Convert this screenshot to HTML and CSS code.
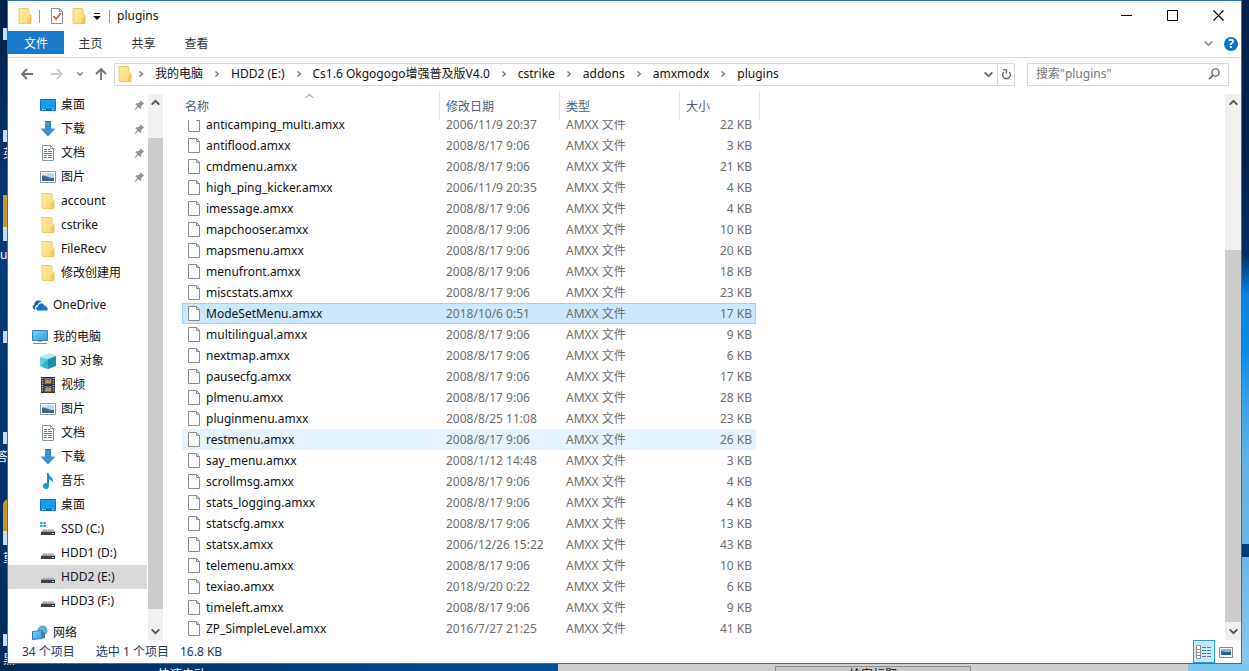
FILE: index.html
```html
<!DOCTYPE html>
<html lang="zh-CN">
<head>
<meta charset="utf-8">
<title>plugins</title>
<link rel="stylesheet" href="styles.css">
</head>
<body>
<svg class="defs" aria-hidden="true">
  <defs>
    <linearGradient id="gFolder" x1="0" x2="1" y1="0" y2="1"><stop offset="0" stop-color="#ffe9a2"/><stop offset="1" stop-color="#fbd975"/></linearGradient>
    <linearGradient id="gScreen" x1="0" x2="1" y1="0" y2="1"><stop offset="0" stop-color="#86d2f8"/><stop offset="1" stop-color="#2b9be6"/></linearGradient>
    <linearGradient id="gDrive" x1="0" x2="0" y1="0" y2="1"><stop offset="0" stop-color="#d8d8d8"/><stop offset="1" stop-color="#8d8d8d"/></linearGradient>
  </defs>
  <symbol id="folder" viewBox="0 0 16 16"><path d="M2 .5h9.500l.5 1v4l2 2v8H2z" fill="url(#gFolder)" stroke="#eccb6b"/><path d="M11.500 15.500v-4l2-3v7z" fill="#f5cf60" stroke="#e3b84b" stroke-width=".7"/></symbol>
  <symbol id="file" viewBox="0 0 16 16"><path d="M2.500 .5h8l3 3v11h-11z" fill="#fcfcfc" stroke="#8c8c8c"/><path d="M10.500 .5v3h3" fill="none" stroke="#8c8c8c"/></symbol>
  <symbol id="desktop" viewBox="0 0 16 16"><path d="M.5 2.500h15v11H.5z" fill="#149af2" stroke="#1175bd"/><path d="M1 12.500h14" stroke="#0868ac"/><path d="M2 12.500h2m1 0h1m6 0h2" stroke="#9bdcff"/></symbol>
  <symbol id="download" viewBox="0 0 16 16"><path d="M5 0h6v7.500h4.500L8 15.500.5 7.500H5z" fill="#3f8fd2"/><path d="M5.500.5h5V8" fill="none" stroke="#3079b8"/></symbol>
  <symbol id="doc" viewBox="0 0 16 16"><path d="M2.500.5h8l3 3v12h-11z" fill="#fff" stroke="#8195a5"/><path d="M10.500.5v3h3" fill="none" stroke="#8195a5"/><path d="M4 4.500h3m1 0h2M4 6.500h3m1 0h4M4 8.500h8M4 10.500h3m1 0h4M4 12.500h3m1 0h4" stroke="#3f86c6"/></symbol>
  <symbol id="picture" viewBox="0 0 16 16"><path d="M.5 2.500h15v11H.5z" fill="#fff" stroke="#8d9ba6"/><path d="M2 4h12v8H2z" fill="#b4d8f0"/><path d="M2 7c3-2 5 2 12 2v3H2z" fill="#3d6a91"/><path d="M3 5h4v1H3z" fill="#fff"/></symbol>
  <symbol id="cloud" viewBox="0 0 16 16"><path d="M3.500 12.500C.3 12.500-.3 8.800 2.200 8 2 4.500 6.300 1.700 9.700 5 7 5 5.600 6.500 5.500 8 3 8.500 2.600 11 3.500 12.500z" fill="#0f62b4"/><path d="M6 13.500c-2.500 0-2.600-4 .2-4C6 5.800 11.300 4.800 12 8.500c2-.3 2.300 1 2.200 1.800 2.200.2 2 3.200 0 3.200z" fill="#1173cc"/></symbol>
  <symbol id="computer" viewBox="0 0 16 16"><path d="M.5 1.500h15v10H.5z" fill="url(#gScreen)" stroke="#3487bd"/><path d="M6 12h4v1H6z" fill="#a7b7c3"/><path d="M1 14.500h14" stroke="#7c8e9c"/></symbol>
  <symbol id="cube" viewBox="0 0 16 16"><path d="M0 4 9 0l7 3-8 3z" fill="#b5eaf0"/><path d="M0 4l8 2v10l-8-3z" fill="#62cfdf"/><path d="M8 6l8-3v10l-8 3z" fill="#1593ad"/><path d="M2 12l6-6v10l-6-2z" fill="#35b5cb"/></symbol>
  <symbol id="video" viewBox="0 0 16 16"><path d="M1 0h14v16H1z" fill="#30343a"/><path d="M2.500 1v14M13.500 1v14" stroke="#d5d5d5" stroke-width="1.500" stroke-dasharray="1 1.300"/><path d="M4.500 1h7v6h-7z" fill="#5b71a0"/><path d="M4.500 9h7v6h-7z" fill="#596c9d"/><path d="m5 6 2-4 1 2 3-2v4M5 14l2-4 2 2 2-2v4" fill="#c49a40"/></symbol>
  <symbol id="music" viewBox="0 0 16 16"><path d="M7 0h1.700c.2 4 5.600 4.500 4.300 10-.6-3-2.300-3.500-4-3.500V13a3 3 0 1 1-2-2.800z" fill="#1d8fe0"/></symbol>
  <symbol id="drive" viewBox="0 0 16 16"><path d="M3 8h10l2 3H1z" fill="url(#gDrive)"/><path d="M1 11h14v3H1z" fill="#3e4145"/><path d="M12 12.500h2" stroke="#a6e0ad"/></symbol>
  <symbol id="ssd" viewBox="0 0 16 16"><use href="#drive"/><path d="M0 1h2.500v2H0zm3.500 0H6v2H3.500zM0 4h2.500v2H0zm3.500 0H6v2H3.500z" fill="#27a8dd"/></symbol>
  <symbol id="network" viewBox="0 0 16 16"><circle cx="10.500" cy="5.500" r="5" fill="#5fabd0"/><path d="M8 2c2 3 5 1 7 5l-3 3-4-3z" fill="#6fb4c0"/><path d="M.5 6.500 10 5.500v8l-9.500 1z" fill="url(#gScreen)" stroke="#247fb8"/><path d="M10 5.500 13 8v5l-3 .500z" fill="#3b83ac"/></symbol>
  <symbol id="pin" viewBox="0 0 12 12"><path d="m7 0 4 4-1.500.5-2 2.500.5 2-1 .8L4.700 7.500 1.200 11 .5 10.500l3-4L1.300 4.300l1-.8 2 .3L7 1.500z" fill="#8a9299"/></symbol>
  <symbol id="crumb" viewBox="0 0 8 8"><path d="m2.500 1.500 2.800 2.500-2.800 2.500" fill="none" stroke="#777" stroke-width="1.400"/></symbol>
  <symbol id="down" viewBox="0 0 10 10"><path d="m1.500 3 3.500 3.500L8.500 3" fill="none" stroke="currentColor" stroke-width="1.600"/></symbol>
  <symbol id="up" viewBox="0 0 10 10"><path d="m1.500 7 3.500-3.500L8.500 7" fill="none" stroke="currentColor" stroke-width="1.600"/></symbol>
  <symbol id="arrow" viewBox="0 0 14 14"><path d="M13 7H2m5-5L2 7l5 5" fill="none" stroke="currentColor" stroke-width="1.800"/></symbol>
</svg>

<div class="desktop" aria-hidden="true">
  <i class="shortcut s1"></i><i class="shortcut s2"></i><i class="shortcut gold s3"></i><i class="shortcut s4"></i><i class="shortcut s5"></i><i class="shortcut gold s6"></i><i class="shortcut s7"></i>
  <span class="caption c1">英</span><span class="caption c2">ui</span><span class="caption c3">答</span><span class="caption c4">重</span><span class="caption c5">黑</span>
  <span class="caption c6">快速启动</span>
  <div class="panel"><span class="panel-button">给安标题</span></div>
</div>

<main class="window">
  <header class="titlebar">
    <svg class="icon"><use href="#folder"/></svg>
    <i class="rule rule-a"></i>
    <button class="quick" aria-label="属性"><svg class="icon" viewBox="0 0 16 16"><path d="M2.500.5h8l3 3v12h-11z" fill="#fff" stroke="#8c8c8c"/><path d="M10.500.5v3h3" fill="none" stroke="#8c8c8c"/><path d="m4.500 8 2.500 3 5-6" fill="none" stroke="#d9633c" stroke-width="1.800"/></svg></button>
    <button class="quick quick-b" aria-label="新建文件夹"><svg class="icon"><use href="#folder"/></svg></button>
    <button class="quick" aria-label="自定义快速访问工具栏"><svg class="caret" viewBox="0 0 8 8"><path d="M1 1.500h6" stroke="#111"/><path d="M0 4h8l-4 4z" fill="#111"/></svg></button>
    <i class="rule rule-b"></i>
    <h1 class="title">plugins</h1>
    <div class="controls">
      <button class="control" aria-label="最小化"><svg viewBox="0 0 11 11"><path d="M0 5.500h11" stroke="#000"/></svg></button>
      <button class="control" aria-label="最大化"><svg viewBox="0 0 11 11"><path d="M.5.5h10v10H.5z" fill="none" stroke="#000"/></svg></button>
      <button class="control" aria-label="关闭"><svg viewBox="0 0 11 11"><path d="m.5.5 10 10m0-10-10 10" stroke="#000" stroke-width="1.100"/></svg></button>
    </div>
  </header>

  <nav class="ribbon" aria-label="功能区">
    <button class="tab tab-file">文件</button>
    <button class="tab">主页</button>
    <button class="tab">共享</button>
    <button class="tab">查看</button>
    <div class="ribbon-end">
      <button class="expand" aria-label="展开功能区"><svg class="chev"><use href="#down"/></svg></button>
      <button class="help" aria-label="帮助">?</button>
    </div>
  </nav>

  <div class="navbar">
    <div class="history">
      <button class="nav-btn" aria-label="后退"><svg class="arrow"><use href="#arrow"/></svg></button>
      <button class="nav-btn off" aria-label="前进"><svg class="arrow forward"><use href="#arrow"/></svg></button>
      <button class="nav-btn recent" aria-label="最近浏览的位置"><svg class="chev-s"><use href="#down"/></svg></button>
      <button class="nav-btn parent" aria-label="上移"><svg class="arrow upward"><use href="#arrow"/></svg></button>
    </div>
    <div class="address">
      <svg class="icon"><use href="#folder"/></svg>
      <div class="crumbs">
        <svg class="sep"><use href="#crumb"/></svg><a href="#">我的电脑</a>
        <svg class="sep"><use href="#crumb"/></svg><a href="#">HDD2 (E:)</a>
        <svg class="sep"><use href="#crumb"/></svg><a href="#">Cs1.6 Okgogogo增强普及版V4.0</a>
        <svg class="sep"><use href="#crumb"/></svg><a href="#">cstrike</a>
        <svg class="sep"><use href="#crumb"/></svg><a href="#">addons</a>
        <svg class="sep"><use href="#crumb"/></svg><a href="#">amxmodx</a>
        <svg class="sep"><use href="#crumb"/></svg><a href="#">plugins</a>
      </div>
      <button class="addr-btn" aria-label="以前的位置"><svg class="chev"><use href="#down"/></svg></button>
      <button class="addr-btn refresh" aria-label="刷新"><svg class="chev" viewBox="0 0 12 12"><path d="M3 3.200a4.300 4.300 0 1 0 6 0M2 1h4v4" fill="none" stroke="#666" stroke-width="1.500"/></svg></button>
    </div>
    <label class="search">
      <input type="text" placeholder='搜索"plugins"' aria-label="搜索">
      <svg class="lens" viewBox="0 0 12 12"><circle cx="7.500" cy="4.500" r="3.600" fill="none" stroke="#666" stroke-width="1.400"/><path d="M5 7.200 1 11.200" stroke="#666" stroke-width="1.800"/></svg>
    </label>
  </div>

  <div class="body">
    <nav class="side" aria-label="导航窗格">
      <ul class="tree">
        <li><a href="#" class="node child"><svg class="icon"><use href="#desktop"/></svg>桌面<svg class="pin"><use href="#pin"/></svg></a></li>
        <li><a href="#" class="node child"><svg class="icon"><use href="#download"/></svg>下载<svg class="pin"><use href="#pin"/></svg></a></li>
        <li><a href="#" class="node child"><svg class="icon"><use href="#doc"/></svg>文档<svg class="pin"><use href="#pin"/></svg></a></li>
        <li><a href="#" class="node child"><svg class="icon"><use href="#picture"/></svg>图片<svg class="pin"><use href="#pin"/></svg></a></li>
        <li><a href="#" class="node child"><svg class="icon"><use href="#folder"/></svg>account</a></li>
        <li><a href="#" class="node child"><svg class="icon"><use href="#folder"/></svg>cstrike</a></li>
        <li><a href="#" class="node child"><svg class="icon"><use href="#folder"/></svg>FileRecv</a></li>
        <li><a href="#" class="node child"><svg class="icon"><use href="#folder"/></svg>修改创建用</a></li>
        <li class="group"><a href="#" class="node"><svg class="icon"><use href="#cloud"/></svg>OneDrive</a></li>
        <li class="group"><a href="#" class="node"><svg class="icon"><use href="#computer"/></svg>我的电脑</a></li>
        <li><a href="#" class="node child"><svg class="icon"><use href="#cube"/></svg>3D 对象</a></li>
        <li><a href="#" class="node child"><svg class="icon"><use href="#video"/></svg>视频</a></li>
        <li><a href="#" class="node child"><svg class="icon"><use href="#picture"/></svg>图片</a></li>
        <li><a href="#" class="node child"><svg class="icon"><use href="#doc"/></svg>文档</a></li>
        <li><a href="#" class="node child"><svg class="icon"><use href="#download"/></svg>下载</a></li>
        <li><a href="#" class="node child"><svg class="icon"><use href="#music"/></svg>音乐</a></li>
        <li><a href="#" class="node child"><svg class="icon"><use href="#desktop"/></svg>桌面</a></li>
        <li><a href="#" class="node child"><svg class="icon"><use href="#ssd"/></svg>SSD (C:)</a></li>
        <li><a href="#" class="node child"><svg class="icon"><use href="#drive"/></svg>HDD1 (D:)</a></li>
        <li><a href="#" class="node child current"><svg class="icon"><use href="#drive"/></svg>HDD2 (E:)</a></li>
        <li><a href="#" class="node child"><svg class="icon"><use href="#drive"/></svg>HDD3 (F:)</a></li>
        <li class="group"><a href="#" class="node"><svg class="icon"><use href="#network"/></svg>网络</a></li>
      </ul>
    </nav>
    <div class="scroll scroll-side">
      <button aria-label="向上滚动"><svg class="chev"><use href="#up"/></svg></button>
      <div class="track track-side"><i class="thumb"></i></div>
      <button aria-label="向下滚动"><svg class="chev"><use href="#down"/></svg></button>
    </div>

    <table class="files">
      <thead>
        <tr><th class="sorted">名称<svg class="sort" viewBox="0 0 10 6"><path d="M1 5l4-4 4 4" fill="none" stroke="#666"/></svg></th><th>修改日期</th><th>类型</th><th>大小</th></tr>
      </thead>
      <tbody>
        <tr><td><svg class="icon"><use href="#file"/></svg>anticamping_multi.amxx</td><td>2006/11/9 20:37</td><td>AMXX 文件</td><td>22 KB</td></tr>
        <tr><td><svg class="icon"><use href="#file"/></svg>antiflood.amxx</td><td>2008/8/17 9:06</td><td>AMXX 文件</td><td>3 KB</td></tr>
        <tr><td><svg class="icon"><use href="#file"/></svg>cmdmenu.amxx</td><td>2008/8/17 9:06</td><td>AMXX 文件</td><td>21 KB</td></tr>
        <tr><td><svg class="icon"><use href="#file"/></svg>high_ping_kicker.amxx</td><td>2006/11/9 20:35</td><td>AMXX 文件</td><td>4 KB</td></tr>
        <tr><td><svg class="icon"><use href="#file"/></svg>imessage.amxx</td><td>2008/8/17 9:06</td><td>AMXX 文件</td><td>4 KB</td></tr>
        <tr><td><svg class="icon"><use href="#file"/></svg>mapchooser.amxx</td><td>2008/8/17 9:06</td><td>AMXX 文件</td><td>10 KB</td></tr>
        <tr><td><svg class="icon"><use href="#file"/></svg>mapsmenu.amxx</td><td>2008/8/17 9:06</td><td>AMXX 文件</td><td>20 KB</td></tr>
        <tr><td><svg class="icon"><use href="#file"/></svg>menufront.amxx</td><td>2008/8/17 9:06</td><td>AMXX 文件</td><td>18 KB</td></tr>
        <tr><td><svg class="icon"><use href="#file"/></svg>miscstats.amxx</td><td>2008/8/17 9:06</td><td>AMXX 文件</td><td>23 KB</td></tr>
        <tr class="selected"><td><svg class="icon"><use href="#file"/></svg>ModeSetMenu.amxx</td><td>2018/10/6 0:51</td><td>AMXX 文件</td><td>17 KB</td></tr>
        <tr><td><svg class="icon"><use href="#file"/></svg>multilingual.amxx</td><td>2008/8/17 9:06</td><td>AMXX 文件</td><td>9 KB</td></tr>
        <tr><td><svg class="icon"><use href="#file"/></svg>nextmap.amxx</td><td>2008/8/17 9:06</td><td>AMXX 文件</td><td>6 KB</td></tr>
        <tr><td><svg class="icon"><use href="#file"/></svg>pausecfg.amxx</td><td>2008/8/17 9:06</td><td>AMXX 文件</td><td>17 KB</td></tr>
        <tr><td><svg class="icon"><use href="#file"/></svg>plmenu.amxx</td><td>2008/8/17 9:06</td><td>AMXX 文件</td><td>28 KB</td></tr>
        <tr><td><svg class="icon"><use href="#file"/></svg>pluginmenu.amxx</td><td>2008/8/25 11:08</td><td>AMXX 文件</td><td>23 KB</td></tr>
        <tr class="hover"><td><svg class="icon"><use href="#file"/></svg>restmenu.amxx</td><td>2008/8/17 9:06</td><td>AMXX 文件</td><td>26 KB</td></tr>
        <tr><td><svg class="icon"><use href="#file"/></svg>say_menu.amxx</td><td>2008/1/12 14:48</td><td>AMXX 文件</td><td>3 KB</td></tr>
        <tr><td><svg class="icon"><use href="#file"/></svg>scrollmsg.amxx</td><td>2008/8/17 9:06</td><td>AMXX 文件</td><td>4 KB</td></tr>
        <tr><td><svg class="icon"><use href="#file"/></svg>stats_logging.amxx</td><td>2008/8/17 9:06</td><td>AMXX 文件</td><td>4 KB</td></tr>
        <tr><td><svg class="icon"><use href="#file"/></svg>statscfg.amxx</td><td>2008/8/17 9:06</td><td>AMXX 文件</td><td>13 KB</td></tr>
        <tr><td><svg class="icon"><use href="#file"/></svg>statsx.amxx</td><td>2006/12/26 15:22</td><td>AMXX 文件</td><td>43 KB</td></tr>
        <tr><td><svg class="icon"><use href="#file"/></svg>telemenu.amxx</td><td>2008/8/17 9:06</td><td>AMXX 文件</td><td>10 KB</td></tr>
        <tr><td><svg class="icon"><use href="#file"/></svg>texiao.amxx</td><td>2018/9/20 0:22</td><td>AMXX 文件</td><td>6 KB</td></tr>
        <tr><td><svg class="icon"><use href="#file"/></svg>timeleft.amxx</td><td>2008/8/17 9:06</td><td>AMXX 文件</td><td>9 KB</td></tr>
        <tr><td><svg class="icon"><use href="#file"/></svg>ZP_SimpleLevel.amxx</td><td>2016/7/27 21:25</td><td>AMXX 文件</td><td>41 KB</td></tr>
      </tbody>
    </table>
    <div class="scroll scroll-main">
      <button aria-label="向上滚动"><svg class="chev"><use href="#up"/></svg></button>
      <div class="track track-main"><i class="thumb"></i></div>
      <button aria-label="向下滚动"><svg class="chev"><use href="#down"/></svg></button>
    </div>
  </div>

  <footer class="status">
    <span>34 个项目</span>
    <span class="picked"><span>选中 1 个项目</span><span>16.8 KB</span></span>
    <div class="views">
      <button class="view active" aria-label="详细信息"><svg class="icon" viewBox="0 0 16 16"><path d="M.5 1.500h4v13h-4z" fill="#fff" stroke="#8a8f98"/><path d="M1 5.500h3M1 8.500h3M1 11.500h3" stroke="#c0776b"/><path d="M6 3.500h4m1 0h4M6 6.500h4m1 0h4M6 9.500h4m1 0h4M6 12.500h4m1 0h4" stroke="#51759c"/></svg></button>
      <button class="view" aria-label="大缩略图"><svg class="icon" viewBox="0 0 16 16"><path d="M1.500 3.500h13v10h-13z" fill="#fff" stroke="#7b8794"/><path d="M3 5h10v4H3z" fill="#8ab9df"/><path d="M3 7c3 0 5 2 6 1h4v3H3z" fill="#2d5f93"/></svg></button>
    </div>
  </footer>
</main>
</body>
</html>
```
FILE: styles.css
```css
* { box-sizing: border-box; }

body {
  margin: 0;
  height: 100vh;
  padding: 0 7px 7px;
  overflow: hidden;
  font: 12px/16px "Noto Sans", "Noto Sans CJK SC", sans-serif;
  color: #111;
}

button {
  margin: 0;
  padding: 0;
  border: 0;
  background: none;
  font: inherit;
  color: inherit;
  display: flex;
  align-items: center;
  justify-content: center;
}

a { color: inherit; text-decoration: none; }
.defs { position: absolute; width: 0; height: 0; }
.icon { width: 16px; height: 16px; flex: none; display: block; }
.chev { width: 11px; height: 11px; display: block; }
.chev-s { width: 8px; height: 8px; }

/* desktop behind the window */
.desktop {
  position: absolute;
  inset: 0;
  z-index: -1;
  overflow: hidden;
  background:
    linear-gradient(#03204a 0, #02224c 24%, #052f61 38%, #0a83e2 44%, #0a8ae8 52%, #3fa5e6 61%, #67b3e3 70%, #6db6e2 81%, #003b78 81%, #003b78 83%, #6db6e2 83%, #8dc9ec) right / 7px 100% no-repeat,
    linear-gradient(#02214b, #053a78 35%, #023469 70%, #022a57) left / 7px 100% no-repeat,
    linear-gradient(90deg, #022a57, #03509b 45%) bottom / 100% 7px no-repeat;
}
.shortcut { position: absolute; left: 3px; width: 6px; height: 12px; background: #c6ddf5; }
.gold { height: 46px; background: linear-gradient(#c9962f 70%, #c6ddf5 70%); }
.s1 { top: 28px; }
.s2 { top: 130px; }
.s3 { top: 195px; }
.s4 { top: 331px; }
.s5 { top: 432px; }
.s6 { top: 499px; border-radius: 6px 0 0 0; }
.s7 { top: 634px; }
.caption { position: absolute; left: 0; color: #fff; }
.c1 { top: 146px; left: 3px; }
.c2 { top: 247px; }
.c3 { top: 449px; left: -4px; }
.c4 { top: 550px; left: 3px; }
.c5 { top: 652px; left: 3px; }
.c6 { top: 667px; left: 158px; }
.panel {
  position: absolute;
  left: 558px;
  right: 61px;
  bottom: 0;
  height: 7px;
  padding: 2px 0 0 217px;
  background: #cfcfcf;
  box-shadow: 61px 0 #7dc5ee;
}
.panel-button {
  display: block;
  width: 196px;
  height: 24px;
  border: 1px solid #8f8f8f;
  background: #c8c8c8;
  text-align: center;
}

/* window frame */
.window {
  height: 100%;
  display: flex;
  flex-direction: column;
  border: 1px solid #2a76ad;
  background: #fff;
}

.titlebar { display: flex; align-items: center; height: 30px; flex: none; padding-left: 9px; }
.rule { width: 1px; height: 13px; background: #999; }
.rule-a { margin: 0 9px 0 6px; }
.rule-b { margin: 0 7px 0 8px; }
.quick-b { margin: 0 6px; }
.caret { width: 8px; height: 8px; }
.title { margin: 0; font-size: 12px; line-height: 16px; font-weight: 400; }
.controls { display: flex; margin-left: auto; align-self: stretch; }
.control { width: 46px; padding-bottom: 1px; }
.control svg { width: 11px; height: 11px; }

.ribbon { display: flex; height: 27px; flex: none; padding-bottom: 3px; border-bottom: 1px solid #dadbdc; color: #333; }
.tab { width: 53px; padding-top: 2px; }
.tab-file { width: 56px; background: #1979ca; color: #fff; }
.ribbon-end { display: flex; align-items: center; gap: 10px; margin-left: auto; padding: 2px 3px 0 0; }
.expand { color: #999; }
.help { width: 14px; height: 14px; border-radius: 50%; background: #1071c9; color: #fff; font-weight: 700; }

.navbar { display: flex; align-items: center; flex: none; height: 34px; padding: 0 12px 2px 0; }
.history { display: flex; align-items: center; width: 106px; padding-left: 12px; color: #707070; }
.nav-btn { width: 14px; height: 22px; }
.nav-btn.off { margin-left: 16px; color: #ccc; }
.nav-btn.recent { margin-left: 9px; }
.nav-btn.parent { margin-left: 7px; }
.arrow { width: 14px; height: 14px; }
.forward { transform: rotate(180deg); }
.upward { transform: rotate(90deg); }
.address {
  display: flex;
  align-items: center;
  flex: 1;
  min-width: 0;
  height: 23px;
  padding-left: 2px;
  border: 1px solid #d9d9d9;
}
.crumbs { display: flex; align-items: center; gap: 10px; flex: 1; min-width: 0; margin-left: 4px; white-space: nowrap; overflow: hidden; }
.sep { width: 8px; height: 8px; flex: none; }
.addr-btn { width: 17px; align-self: stretch; color: #666; }
.refresh { border-left: 1px solid #d9d9d9; }
.search {
  display: flex;
  align-items: center;
  width: 202px;
  height: 23px;
  margin-left: 12px;
  padding: 0 8px;
  border: 1px solid #d9d9d9;
}
.search input { flex: 1; min-width: 0; padding: 0; border: 0; outline: 0; background: none; font: inherit; }
.search input::placeholder { color: #757575; opacity: 1; }
.lens { width: 12px; height: 12px; }

/* panes */
.body { display: flex; flex: 1; min-height: 0; }
.side { width: 140px; flex: none; padding: 1px 1px 0 0; overflow: hidden; }
.tree { margin: 0; padding: 0; list-style: none; }
.group { margin-top: 8px; }
.node { display: flex; align-items: center; gap: 5px; height: 24px; padding-left: 24px; white-space: nowrap; }
.child { padding-left: 32px; }
.current { background: #d9d9d9; }
.pin { width: 11px; height: 11px; margin-left: auto; margin-right: 2px; }

.scroll { display: flex; flex-direction: column; flex: none; width: 16px; padding-top: 2px; color: #505050; }
.scroll-side { width: 15px; }
.scroll button { height: 17px; flex: none; background: #f0f0f0; }
.track { display: grid; flex: 1; min-height: 0; background: #f0f0f0; }
.thumb { grid-row: 2; background: #cdcdcd; }
.track-side { grid-template-rows: 27fr 471fr 14fr; }
.track-main { grid-template-rows: 139fr 373fr 1fr; }

.files { display: flex; flex-direction: column; flex: 1; min-width: 0; padding-left: 19px; border-spacing: 0; }
.files thead, .files tbody, .files tr { display: grid; }
.files tr { grid-template-columns: 258px 120px 120px 76px; }
.files thead { flex: none; }
.files th {
  position: relative;
  height: 28px;
  padding: 7px 0 0 6px;
  border-right: 1px solid #e5e5e5;
  color: #4c607a;
  font-weight: 400;
  text-align: left;
}
.files th:first-child { padding-left: 3px; }
.files th:last-child { margin-right: -4px; }
.sort { position: absolute; left: 50%; top: 1px; width: 9px; height: 6px; margin-left: -6px; }
.files tbody { flex: 1; min-height: 0; align-content: end; overflow: hidden; padding-bottom: 1px; }
.files tbody tr { width: 574px; height: 21px; border: 1px solid transparent; }
.files td { display: flex; align-items: center; padding: 0 0 0 5px; color: #6d6d6d; }
.files td:first-child { gap: 4px; padding-left: 3px; color: #111; }
.files td:last-child { justify-content: flex-end; padding: 0 5px 0 0; }
.files .selected { background: #cce8ff; border-color: #99d1ff; }
.files .hover { background: #e5f3ff; }

.status { display: flex; align-items: center; flex: none; height: 23px; padding-left: 14px; color: #1e395b; }
.picked { display: flex; gap: 11px; margin-left: 21px; }
.views { display: flex; align-self: stretch; margin-left: auto; padding-right: 4px; }
.view { width: 22px; }
.view.active { background: #cce8f6; border: 1px solid #26a0da; }
```
